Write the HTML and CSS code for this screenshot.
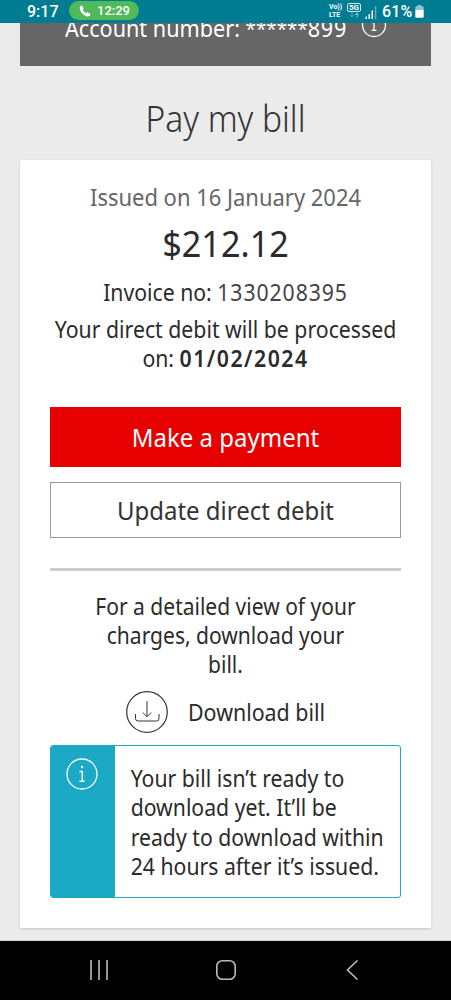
FILE: index.html
```html
<!DOCTYPE html>
<html lang="en">
<head>
<meta charset="utf-8">
<title>Pay my bill</title>
<link rel="stylesheet" href="styles.css">
</head>
<body>
<div class="screen">
  <header class="status">
    <span class="clock">9:17</span>
    <span class="call">
      <svg width="12" height="12" viewBox="0 0 13 13"><path d="M1 1.500C2 .3 3.200.3 3.800 1.300L4.900 3.400C5.200 4.100 4.300 4.600 4.200 5.200C4.500 6.900 6.200 8.400 7.700 8.800C8.400 8.700 8.800 7.700 9.600 8L11.900 9.500C12.900 10.400 11.900 11.900 10.600 12.300C5.800 13.300-.5 6.600 1 1.500Z" fill="#fff"/></svg>
      <span>12:29</span>
    </span>
    <span class="volte"><span>Vo))</span><span>LTE</span></span>
    <span class="net"><span class="five">5G</span>
      <svg width="11" height="6" viewBox="0 0 11 6" fill="none" stroke="#4fa3b3"><path d="M3 0v5M1 3l2 2 2-2"/><path d="M8 6V1M6 3l2-2 2 2" stroke="#8cc4cf"/></svg>
    </span>
    <svg class="signal" width="12" height="13" viewBox="0 0 12 13" fill="#fff"><path d="M.5 10.500h1.500V13H.5zM3.500 8H5v5H3.500zM6.500 4.500H8V13H6.500z"/><path d="M9.800 0h1.500v13H9.800z" opacity=".4"/></svg>
    <span class="pct">61%</span>
    <svg class="battery" width="9" height="13" viewBox="0 0 9 13"><path d="M2.700 0h3.600v1.200H7.500q1.200 0 1.200 1.200V5H.3V2.400Q.3 1.200 1.500 1.200h1.200z" fill="#8fc5cf"/><path d="M.3 5h8.400v6.500q0 1.200-1.200 1.200h-6Q.3 12.700.3 11.500z" fill="#fff"/></svg>
  </header>
  <main class="page">
    <section class="account">
      <span class="account-label">Account number: <span class="stars">******</span><span class="tail">899</span></span>
      <svg width="26" height="26" viewBox="0 0 26 26" fill="none" stroke="#fff" stroke-width="1.300"><circle cx="13" cy="13" r="11.500"/><path d="M10.500 10.500H13V18M10.500 18.300h5"/><circle cx="13" cy="7" r=".7" fill="#fff"/></svg>
    </section>
    <h1 class="title">Pay my bill</h1>
    <section class="card">
      <p class="issued">Issued on 16 January 2024</p>
      <p class="amount">$212.12</p>
      <p class="invoice">Invoice no: <span class="digits">1330208395</span></p>
      <p class="debit">Your direct debit will be processed<br>on: <b>01/02/2024</b></p>
      <button class="btn primary"><span>Make a payment</span></button>
      <button class="btn outline"><span>Update direct debit</span></button>
      <hr class="rule">
      <p class="detail">For a detailed view of your<br>charges, download your<br>bill.</p>
      <a class="download">
        <svg width="42" height="42" viewBox="0 0 42 42" fill="none" stroke="#333"><circle cx="21" cy="21" r="20.300" stroke-width="1.200"/><path d="M21 10v15.500M16.800 21.500l4.200 4.200 4.200-4.200M9.500 23v4.500q0 2.500 2.500 2.500h18.500q2.500 0 2.500-2.500V23"/></svg>
        <span>Download bill</span>
      </a>
      <div class="notice">
        <div class="notice-side">
          <svg width="32" height="32" viewBox="0 0 32 32" fill="none" stroke="#fff" stroke-width="1.300"><circle cx="16" cy="16" r="15"/><path d="M13.500 13.500H16.300V23M13.500 23.200h5.200" stroke-width="1.500"/><circle cx="16" cy="9" r="1.200" fill="#fff" stroke="none"/></svg>
        </div>
        <p class="notice-text">Your bill isn’t ready to<br>download yet. It’ll be<br>ready to download within<br>24 hours after it’s issued.</p>
      </div>
    </section>
  </main>
  <nav class="nav">
    <svg width="20" height="20" viewBox="0 0 20 20" stroke="#bbb" stroke-width="1.600"><path d="M2 0v20M10 0v20M18 0v20"/></svg>
    <svg width="20" height="20" viewBox="0 0 20 20" fill="none" stroke="#bbb" stroke-width="1.600"><rect x=".8" y=".8" width="18.400" height="18.400" rx="5.500"/></svg>
    <svg width="20" height="20" viewBox="0 0 20 20" fill="none" stroke="#bbb" stroke-width="1.600"><path d="M15.500 .5L5.500 10l10 9.500"/></svg>
  </nav>
</div>
</body>
</html>
```
FILE: styles.css
```css
* { box-sizing: border-box; }
body { margin: 0; background: #ebebeb; font-family: "Noto Sans", "Open Sans", sans-serif; color: #2b2b2b; }
p, h1, hr { margin: 0; }
.screen { width: 451px; height: 1000px; display: flex; flex-direction: column; overflow: hidden; }
.status { height: 23px; background: #007c92; color: #fff; display: flex; align-items: center; padding: 0 0 1px 27px; font-family: Roboto, sans-serif; flex: none; }
.clock { font-size: 16px; width: 42px; font-weight: 500; }
.call { width: 70px; height: 19px; border-radius: 10px; background: #50b95b; display: flex; align-items: center; gap: 6px; padding-left: 10px; font-size: 13px; font-weight: 500; margin-right: 190px; flex: none; margin-top: -1px; }
.volte { font-size: 7px; line-height: 8px; font-weight: 700; display: flex; flex-direction: column; width: 17px; }
.net { width: 16px; display: flex; flex-direction: column; align-items: center; margin-right: 3px; margin-top: -1px; }
.five { border: 1px solid #cfe6ea; border-radius: 2px; font-size: 8px; line-height: 7px; font-weight: 700; padding: 0 1px; }
.signal { margin: 3px 5px 0 0; }
.pct { font-size: 16px; font-weight: 500; width: 33px; letter-spacing: .2px; }
.page { height: 918px; flex: none; overflow: hidden; padding: 0 20px; border-bottom: 1px solid #cfcfcf; }
.account { height: 43px; background: #666; color: #fff; display: flex; align-items: flex-start; padding-left: 45px; overflow: hidden; }
.account-label { font-size: 23px; line-height: 30px; margin-top: -10px; width: 296px; flex: none; white-space: nowrap; transform: scaleX(.94); transform-origin: left; }
.stars { font-size: 20px; line-height: 20px; vertical-align: 1px; }
.tail { letter-spacing: .8px; }
.account svg { margin-top: -11px; flex: none; }
.title { height: 94px; padding-top: 28px; text-align: center; font-weight: 300; font-size: 36px; line-height: 50px; color: #333; transform: scaleX(.93); }
.card { height: 768px; background: #fff; box-shadow: 0 1px 2px rgba(0,0,0,.16); padding: 20px 30px 0; text-align: center; font-size: 23px; line-height: 29px; white-space: nowrap; }
.issued { height: 35px; padding-top: 3px; color: #666; transform: scaleX(.955); }
.amount { height: 58px; font-size: 36px; line-height: 57px; transform: scaleX(.95); }
.invoice { height: 42px; padding-top: 5px; transform: scaleX(.922); }
.digits { letter-spacing: 1px; color: #444; }
.debit { height: 92px; margin: 0 -20px; transform: scaleX(.924); }
.debit b { font-weight: 600; letter-spacing: 1.600px; }
.btn { display: block; width: 351px; border: 0; border-radius: 0; padding: 0; font-family: inherit; font-size: 26px; }
.btn span { display: block; transform: scaleX(.922); }
.primary { height: 60px; background: #e60000; color: #fff; margin-bottom: 15px; padding-bottom: 1px; }
.outline { height: 56px; border: 1px solid #999; background: #fff; color: #333; }
.rule { border: 0; height: 3px; background: #ccc; margin: 30px 0 21px; }
.detail { height: 99px; transform: scaleX(.914); }
.download { height: 42px; display: flex; align-items: center; padding-left: 76px; gap: 20px; }
.download span { transform: scaleX(.93); transform-origin: left; }
.notice { margin-top: 12px; height: 153px; border: 1px solid #1ca9c6; border-radius: 3px; display: flex; overflow: hidden; text-align: left; }
.notice-side { width: 64px; flex: none; background: #1ca9c6; padding: 12px 0 0 15px; }
.notice-text { padding: 18px 0 0 17px; line-height: 29.300px; transform: scaleX(.922); transform-origin: left; }
.nav { flex: 1; background: #000; display: flex; align-items: center; padding: 0 89px 1px; justify-content: space-between; }
```
